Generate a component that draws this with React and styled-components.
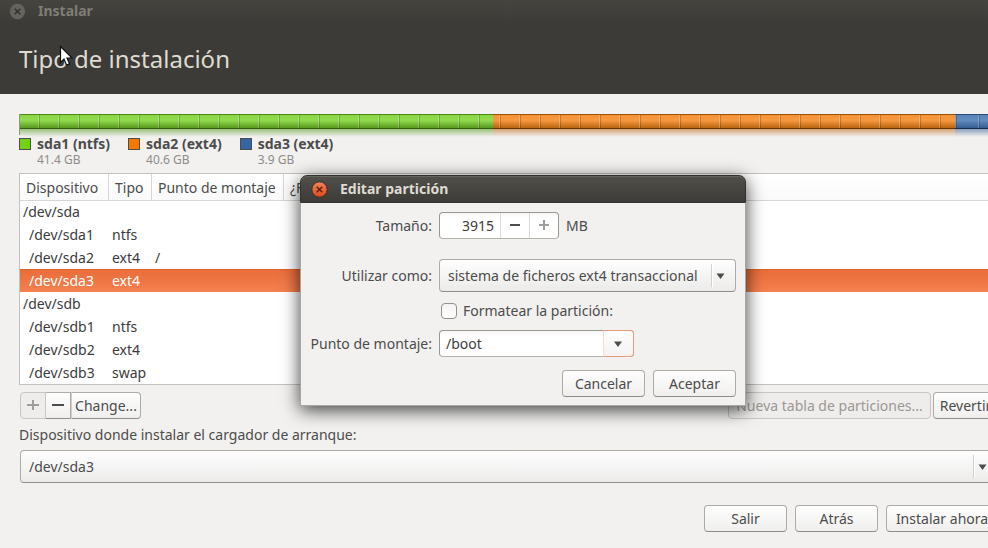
import React, { useState } from "react";
import styled, { createGlobalStyle, css } from "styled-components";

const Global = createGlobalStyle`
  * { box-sizing: border-box; }
  body {
    margin: 0;
    overflow: hidden;
    background: #f2f1f0;
    color: #4c4c4c;
    font: 14px/20px "Noto Sans", "Open Sans", sans-serif;
  }
  button, input, select { font: inherit; color: inherit; margin: 0; }
`;

/* The window reaches a little past the right edge of the screen. */
const Window = styled.div`
  width: calc(100% + 30px);
  min-height: 100vh;
  display: flex;
  flex-direction: column;
`;

const Header = styled.header`
  height: 94px;
  background: linear-gradient(#45443f, #3c3b37 24px);
  color: #dfdbd2;
`;

const TitleBar = styled.div`
  display: flex;
  align-items: center;
  gap: 12px;
  height: 22px;
  padding-left: 9px;
  font-weight: 700;
  color: #807d78;
`;

const PageTitle = styled.h1`
  margin: 0;
  padding: 20px 19px;
  font-size: 24px;
  line-height: 34px;
  font-weight: 400;
`;

const CloseButton = styled.button`
  display: flex;
  padding: 0;
  border: 0;
  background: none;
`;

const Main = styled.main`
  display: flex;
  flex-direction: column;
  padding: 20px 20px 16px 19px;
`;

const Bar = styled.div`
  display: flex;
  height: 21px;
  border-left: 1px solid rgba(60, 110, 20, .6);
`;

const ticks =
  "repeating-linear-gradient(90deg, transparent 0 18px, rgba(255,255,255,.22) 18px 19px, rgba(0,0,0,.2) 19px 20px)";

const Segment = styled.div`
  flex: ${(p) => p.$size} 1 0;
  &::before, &::after {
    content: "";
    display: block;
  }
  &::before {
    height: 13px;
    border: solid ${(p) => p.$edge};
    border-bottom-color: ${(p) => p.$base};
    border-width: 1px 0;
    background:
      ${ticks},
      linear-gradient(${(p) => p.$top}, ${(p) => p.$mid} 40%, ${(p) => p.$low});
    background-position: ${(p) => p.$phase}px 0, 0 0;
  }
  &::after {
    height: 8px;
    opacity: .55;
    background: linear-gradient(${(p) => p.$low}, transparent);
  }
`;

const Legend = styled.ul`
  display: flex;
  gap: 18px;
  margin: 0;
  padding: 0;
  list-style: none;
`;

const LegendItem = styled.li`
  display: grid;
  grid-template-columns: 12px auto;
  column-gap: 6px;
  align-items: center;
`;

const Swatch = styled.span`
  height: 12px;
  border: 1px solid #4c4c4c;
  background: ${(p) => p.$color};
`;

const LegendName = styled.strong`
  line-height: 18px;
`;

const LegendSize = styled.small`
  grid-column: 2;
  font-size: 12px;
  line-height: 14px;
  color: #8f8c89;
`;

const TableFrame = styled.div`
  margin-top: 6px;
  border: 1px solid #c4c2bf;
  background: #fff;
`;

const Table = styled.table`
  width: 100%;
  table-layout: fixed;
  border-collapse: separate;
  border-spacing: 0;
`;

const Col = styled.col`
  width: ${(p) => p.$width};
`;

const HeadCell = styled.th`
  height: 26px;
  padding: 2px 0 0 6px;
  border-right: 1px solid #d9d5d3;
  box-shadow: 0 1px #d9d5d3;
  background: linear-gradient(#fff, #fafafa);
  font-weight: 400;
  text-align: left;
  white-space: nowrap;
`;

const Row = styled.tr`
  height: 23px;
  color: #3c3c3c;
  ${(p) =>
    p.$selected &&
    css`
      background: linear-gradient(#e86c38, #f58050);
      box-shadow: inset 0 1px #e0622c;
      color: #fff;
    `}
`;

const Cell = styled.td`
  padding: 0 0 0 ${(p) => (p.$indent ? 9 : 3)}px;
  white-space: nowrap;
`;

const Toolbar = styled.div`
  display: flex;
  justify-content: space-between;
  padding: 7px 0 0 1px;
`;

const Group = styled.div`
  display: flex;
  gap: ${(p) => p.$gap || 0}px;
`;

const Button = styled.button`
  min-width: ${(p) => p.$min || 0}px;
  height: 27px;
  padding: 0 4px;
  border: 1px solid #aeaba7;
  border-bottom-color: #8f8c89;
  border-radius: 4px;
  background: linear-gradient(#fefefe, #f0efee);
  white-space: nowrap;
  &:disabled {
    border-color: #c8c5c2;
    background: #eeedec;
    color: #9c9792;
  }
`;

const JoinedButton = styled(Button)`
  display: flex;
  align-items: center;
  justify-content: center;
  padding: 0 3px;
  border-radius: 0;
  & + & { border-left-width: 0; }
  &:first-child { border-radius: 4px 0 0 4px; }
  &:last-child { border-radius: 0 4px 4px 0; border-left: 1px solid #d0cdca; }
`;

const FieldLabel = styled.label`
  text-align: ${(p) => p.$align || "left"};
`;

const SelectBox = styled.div`
  position: relative;
  display: flex;
  svg {
    position: absolute;
    right: 0;
    top: 5px;
    pointer-events: none;
  }
`;

const BootSelect = styled(SelectBox)`
  margin-left: 1px;
`;

const Select = styled.select`
  appearance: none;
  width: 100%;
  height: 33px;
  padding: 0 30px 0 8px;
  border: 1px solid #aeaba7;
  border-bottom-color: #8f8c89;
  border-radius: 4px;
  background: linear-gradient(#fefefe, #ecebea);
`;

const Footer = styled.footer`
  display: flex;
  justify-content: flex-end;
  gap: 8px;
  padding-top: 22px;
`;

const Dialog = styled.section`
  position: absolute;
  left: 300px;
  top: 175px;
  width: 446px;
  border-radius: 7px 7px 0 0;
  background: #f2f1f0;
  box-shadow: 0 4px 18px rgba(0, 0, 0, .75);
`;

const DialogTitle = styled.header`
  display: flex;
  align-items: center;
  gap: 12px;
  height: 28px;
  padding-left: 10px;
  border: 1px solid #33322e;
  border-radius: 7px 7px 0 0;
  background: linear-gradient(#504f49, #3c3b37);
  box-shadow: inset 0 1px #66645c;
  color: #dfdbd2;
  font-weight: 700;
`;

const DialogBody = styled.form`
  padding: 9px 9px 8px 8px;
  border: solid #a9a6a3;
  border-width: 0 1px 1px;
`;

const Fields = styled.div`
  display: grid;
  grid-template-columns: 123px 1fr;
  column-gap: 7px;
  align-items: center;
`;

const FieldRow = styled.div`
  display: flex;
  align-items: center;
  gap: ${(p) => p.$gap || 0}px;
  padding-bottom: ${(p) => p.$below || 0}px;
`;

const LabelRow = styled(FieldRow)`
  justify-content: flex-end;
`;

const EntryFrame = styled.div`
  display: flex;
  width: ${(p) => p.$width}px;
  height: 27px;
  border: 1px solid #9a9793;
  border-bottom-color: #b5b2ae;
  border-radius: 4px;
  background: linear-gradient(#f6f6f6, #fff 5px);
`;

const Entry = styled.input`
  flex: 1;
  min-width: 0;
  padding: 0 6px;
  border: 0;
  outline: 0;
  background: none;
  text-align: ${(p) => p.$align || "left"};
  color: #3c3c3c;
`;

const StepButton = styled.button`
  display: flex;
  align-items: center;
  justify-content: center;
  width: 29px;
  padding: 0;
  border: 0;
  border-left: 1px solid #dcdad8;
  background: none;
`;

const DropButton = styled.button`
  display: flex;
  align-items: center;
  justify-content: center;
  width: 31px;
  margin: -1px;
  padding: 0 2px 0 0;
  border: 1px solid #e79a7d;
  border-left-color: #f8dcd0;
  border-radius: 0 4px 4px 0;
  background: linear-gradient(#fdfdfd, #f4f3f2);
`;

const CheckBox = styled.input`
  appearance: none;
  width: 16px;
  height: 16px;
  && { margin: 0 6px 0 2px; }
  border: 1px solid #94918d;
  border-radius: 4px;
  background: linear-gradient(#f3f2f1, #fff);
  &:checked { background: #f07746; }
`;

const FormatLabel = styled(FieldLabel)`
  padding: 9px 0;
`;

const DialogActions = styled(Footer)`
  padding-top: 13px;
`;

const BootLabel = styled(FieldLabel)`
  padding: 6px 0 5px;
`;

const Pointer = styled.svg`
  position: absolute;
  left: 59px;
  top: 45px;
`;

function CloseIcon({ active }) {
  return (
    <svg width="17" height="17" viewBox="0 0 17 17">
      <defs>
        <linearGradient id="glow" x1="0" y1="0" x2="0" y2="1">
          <stop offset="0" stopColor="#f8825c" />
          <stop offset="1" stopColor="#df4a16" />
        </linearGradient>
      </defs>
      <circle cx="8.5" cy="8.5" r="7.7" fill={active ? "url(#glow)" : "#64635e"} stroke={active ? "#33322e" : "none"} />
      <path d="M5.700 5.700l5.600 5.600M11.300 5.700l-5.600 5.600" stroke={active ? "#4a2415" : "#302f2c"} strokeWidth="1.4" />
    </svg>
  );
}

function SignIcon({ plus, dim, size = 11 }) {
  return (
    <svg width={size} height="11" viewBox={`0 0 ${size} 11`}>
      <path
        d={`M0 4h${size}v2h-${size}z` + (plus ? `M${Math.floor(size / 2) - 1} 0h2v10h-2z` : "")}
        fill={dim ? "#a09c97" : "#4c4c4c"}
      />
    </svg>
  );
}

function ArrowIcon() {
  return (
    <svg width="8" height="6" viewBox="0 0 8 6">
      <path d="M0 .5h8L4 6z" fill="#4c4c4c" />
    </svg>
  );
}

function SelectArrow() {
  return (
    <svg width="26" height="23" viewBox="0 0 26 23">
      <path d="M1.5 0v23" stroke="#d3d0cd" />
      <path d="M2.5 0v23" stroke="#fff" />
      <path d="M6.500 9.500h8L10.500 15z" fill="#4c4c4c" />
    </svg>
  );
}

const partitions = [
  { name: "sda1 (ntfs)", size: "41.4 GB", weight: 473, phase: 0, color: "#73d216", top: "#8ad446", mid: "#93dc4f", low: "#58991e", edge: "#4d8a17", base: "#33600c" },
  { name: "sda2 (ext4)", size: "40.6 GB", weight: 463, phase: -12, color: "#f57900", top: "#f49236", mid: "#f99a40", low: "#b8640f", edge: "#9c5009", base: "#6b3400" },
  { name: "sda3 (ext4)", size: "3.9 GB", weight: 43, phase: 5, color: "#3465a4", top: "#5a84b8", mid: "#628cbf", low: "#365d91", edge: "#2b4b76", base: "#182e4c" },
];

const rows = [
  { device: "/dev/sda" },
  { device: "/dev/sda1", type: "ntfs" },
  { device: "/dev/sda2", type: "ext4", mount: "/" },
  { device: "/dev/sda3", type: "ext4", selected: true },
  { device: "/dev/sdb" },
  { device: "/dev/sdb1", type: "ntfs" },
  { device: "/dev/sdb2", type: "ext4" },
  { device: "/dev/sdb3", type: "swap" },
];

function EditDialog() {
  const [size, setSize] = useState("3915");
  const [mount, setMount] = useState("/boot");
  const step = (n) => setSize(String(Number(size) + n));
  return (
    <Dialog role="dialog" aria-labelledby="dialog-title">
      <DialogTitle>
        <CloseButton aria-label="Cerrar">
          <CloseIcon active />
        </CloseButton>
        <span id="dialog-title">Editar partición</span>
      </DialogTitle>
      <DialogBody onSubmit={(e) => e.preventDefault()}>
        <Fields>
          <LabelRow $below={20}><FieldLabel htmlFor="size">Tamaño:</FieldLabel></LabelRow>
          <FieldRow $gap={7} $below={20}>
            <EntryFrame $width={120}>
              <Entry id="size" $align="right" inputMode="numeric" value={size} onChange={(e) => setSize(e.target.value)} />
              <StepButton type="button" aria-label="Reducir" onClick={() => step(-1)}><SignIcon size={10} /></StepButton>
              <StepButton type="button" aria-label="Aumentar"><SignIcon plus dim size={10} /></StepButton>
            </EntryFrame>
            <span>MB</span>
          </FieldRow>
          <FieldLabel $align="right" htmlFor="use">Utilizar como:</FieldLabel>
          <SelectBox>
            <Select id="use">
              <option>sistema de ficheros ext4 transaccional</option>
            </Select>
            <SelectArrow />
          </SelectBox>
          <span />
          <FieldRow>
            <CheckBox id="format" type="checkbox" />
            <FormatLabel htmlFor="format">Formatear la partición:</FormatLabel>
          </FieldRow>
          <FieldLabel $align="right" htmlFor="mount">Punto de montaje:</FieldLabel>
          <EntryFrame $width={195}>
            <Entry id="mount" value={mount} onChange={(e) => setMount(e.target.value)} />
            <DropButton type="button" aria-label="Mostrar puntos de montaje"><ArrowIcon /></DropButton>
          </EntryFrame>
        </Fields>
        <DialogActions>
          <Button type="button" $min={83}>Cancelar</Button>
          <Button $min={83}>Aceptar</Button>
        </DialogActions>
      </DialogBody>
    </Dialog>
  );
}

export default function App() {
  return (
    <>
      <Global />
      <Window>
        <Header>
          <TitleBar>
            <CloseButton aria-label="Cerrar ventana"><CloseIcon /></CloseButton>
            <span>Instalar</span>
          </TitleBar>
          <PageTitle>Tipo de instalación</PageTitle>
        </Header>
        <Main>
          <Bar>
            {partitions.map((p) => (
              <Segment key={p.name} $size={p.weight} $phase={p.phase} $top={p.top} $mid={p.mid} $low={p.low} $edge={p.edge} $base={p.base} />
            ))}
          </Bar>
          <Legend>
            {partitions.map((p) => (
              <LegendItem key={p.name}>
                <Swatch $color={p.color} />
                <LegendName>{p.name}</LegendName>
                <LegendSize>{p.size}</LegendSize>
              </LegendItem>
            ))}
          </Legend>
          <TableFrame>
            <Table>
              <colgroup>
                <Col $width="89px" />
                <Col $width="43px" />
                <Col $width="132px" />
                <Col $width="auto" />
              </colgroup>
              <thead>
                <tr>
                  <HeadCell>Dispositivo</HeadCell>
                  <HeadCell>Tipo</HeadCell>
                  <HeadCell>Punto de montaje</HeadCell>
                  <HeadCell>¿Formatear?</HeadCell>
                </tr>
              </thead>
              <tbody>
                {rows.map((r) => (
                  <Row key={r.device} $selected={r.selected}>
                    <Cell $indent={Boolean(r.type)}>{r.device}</Cell>
                    <Cell>{r.type}</Cell>
                    <Cell>{r.mount}</Cell>
                    <Cell />
                  </Row>
                ))}
              </tbody>
            </Table>
          </TableFrame>
          <Toolbar>
            <Group>
              <JoinedButton disabled $min={26} aria-label="Añadir"><SignIcon plus dim size={12} /></JoinedButton>
              <JoinedButton $min={25} aria-label="Quitar"><SignIcon size={12} /></JoinedButton>
              <JoinedButton $min={70}>Change...</JoinedButton>
            </Group>
            <Group $gap={2}>
              <Button disabled $min={203}>Nueva tabla de particiones...</Button>
              <Button $min={65}>Revertir</Button>
            </Group>
          </Toolbar>
          <BootLabel htmlFor="boot">Dispositivo donde instalar el cargador de arranque:</BootLabel>
          <BootSelect>
            <Select id="boot"><option>/dev/sda3</option></Select>
            <SelectArrow />
          </BootSelect>
          <Footer>
            <Button $min={83}>Salir</Button>
            <Button $min={83}>Atrás</Button>
            <Button $min={112}>Instalar ahora</Button>
          </Footer>
        </Main>
      </Window>
      <EditDialog />
      <Pointer width="14" height="22" viewBox="0 0 14 22" aria-hidden="true">
        <path d="M1.500 1.500v16l3.500-3.500 2.500 6 3-1.200-2.500-5.800h5z" fill="#fff" stroke="#111" strokeWidth="1.200" />
      </Pointer>
    </>
  );
}
